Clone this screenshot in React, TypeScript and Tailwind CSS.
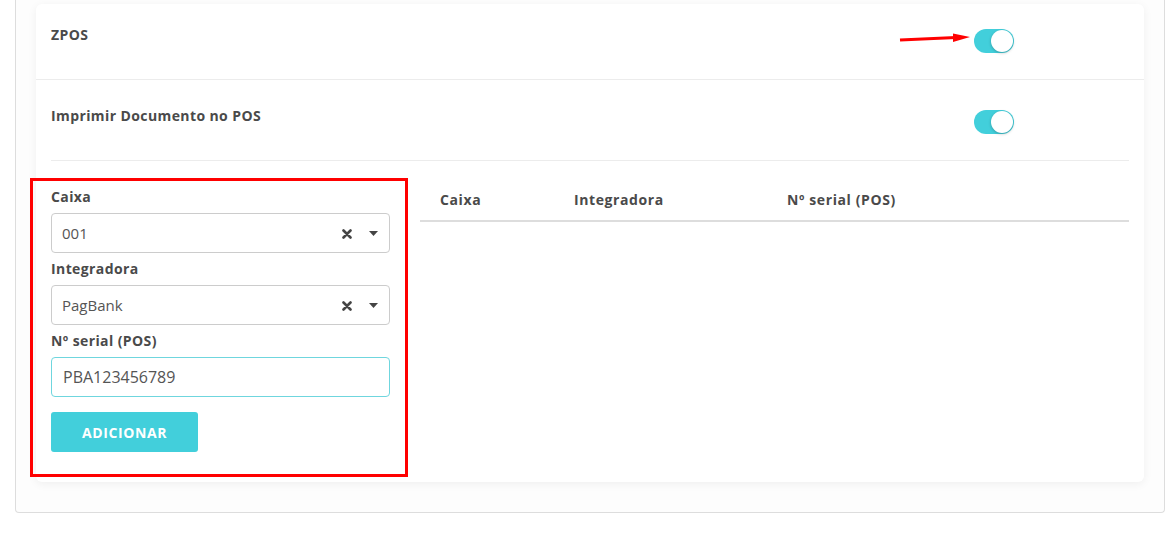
import { useState } from 'react';

const font = { fontFamily: '"Open Sans", "Liberation Sans", sans-serif' };

function Toggle({ on, onChange }: { on: boolean; onChange: () => void }) {
  return (
    <button
      type="button"
      onClick={onChange}
      className={`relative block h-[24px] w-[40px] rounded-full ${on ? 'bg-[#42cfdb]' : 'bg-[#ddd]'}`}
    >
      <span
        className={`absolute top-[1px] h-[22px] w-[22px] rounded-full bg-white shadow-[0_1px_3px_rgba(0,0,0,0.25)] ${on ? 'left-[17px]' : 'left-[1px]'}`}
      />
    </button>
  );
}

function SelectBox({ value }: { value: string }) {
  return (
    <div className="flex h-[40px] items-center rounded-[4px] border border-[#cccccc] bg-white pl-[10px] pr-[10px] text-[15px] text-[#555]">
      <span className="flex-1">{value}</span>
      <svg width="10" height="10" viewBox="0 0 10 10" className="mr-[17px] mt-[2px]">
        <path d="M1.5 1.5 L8.5 8.5 M8.5 1.5 L1.5 8.5" stroke="#444" strokeWidth="2.6" strokeLinecap="round" />
      </svg>
      <svg width="9" height="5" viewBox="0 0 9 5" className="mr-[1px]">
        <path d="M0 0 H9 L4.5 5 Z" fill="#444" />
      </svg>
    </div>
  );
}

export default function App() {
  const [zpos, setZpos] = useState(true);
  const [imprimir, setImprimir] = useState(true);

  return (
    <div style={font} className="min-h-[534px] bg-white">
      <div className="ml-[15px] mr-[7px] rounded-b-[4px] border-x border-b border-[#dddddd] bg-[#fdfdfd] px-5 pt-1 pb-[30px]">
        <div className="rounded-[6px] bg-white shadow-[0_2px_10px_rgba(0,0,0,0.06)]">
          {/* ZPOS */}
          <div className="flex h-[76px] border-b border-[#ececec] px-[15px] pt-[21px]">
            <h4 className="flex-1 text-[14px] font-bold leading-[20px] tracking-[0.4px] text-[#4a4a4a]">ZPOS</h4>
            <div className="relative mt-[4px] mr-[115px]">
              <svg
                width="74"
                height="12"
                viewBox="0 0 74 12"
                className="pointer-events-none absolute right-full top-[3px] mr-[2px]"
              >
                <path d="M2 8 L58 5.6" stroke="#ff0000" strokeWidth="3" />
                <polygon points="55,1.5 72,5 55,10" fill="#ff0000" />
              </svg>
              <Toggle on={zpos} onChange={() => setZpos(!zpos)} />
            </div>
          </div>

          {/* Imprimir */}
          <div className="mx-[15px] flex h-[81px] border-b border-[#ececec] pt-[26px]">
            <h4 className="flex-1 text-[14px] font-bold leading-[20px] tracking-[0.4px] text-[#4a4a4a]">
              Imprimir Documento no POS
            </h4>
            <div className="mt-[4px] mr-[115px]">
              <Toggle on={imprimir} onChange={() => setImprimir(!imprimir)} />
            </div>
          </div>

          {/* Form + table */}
          <div className="flex px-[15px] pb-[30px]">
            <div className="relative w-[339px] shrink-0 pt-[26px]">
              <div className="pointer-events-none absolute -left-[21px] -right-[18px] top-[17px] -bottom-[25px] border-[3px] border-[#ff0000]" />
              <label className="block text-[14px] font-bold leading-[20px] tracking-[0.4px] text-[#4a4a4a]">Caixa</label>
              <div className="mt-[6px]">
                <SelectBox value="001" />
              </div>
              <label className="mt-[6px] block text-[14px] font-bold leading-[20px] tracking-[0.4px] text-[#4a4a4a]">
                Integradora
              </label>
              <div className="mt-[6px]">
                <SelectBox value="PagBank" />
              </div>
              <label className="mt-[6px] block text-[14px] font-bold leading-[20px] tracking-[0.4px] text-[#4a4a4a]">
                Nº serial (POS)
              </label>
              <input
                defaultValue="PBA123456789"
                className="mt-[6px] block h-[40px] w-full rounded-[4px] border border-[#6fd6de] px-[11px] text-[16px] text-[#555] outline-none"
              />
              <button
                type="button"
                className="mt-[15px] h-[40px] w-[147px] rounded-[3px] bg-[#42cfdb] text-[14px] font-bold tracking-[0.6px] text-white"
              >
                ADICIONAR
              </button>
            </div>

            <div className="ml-[30px] flex-1 pt-[18px]">
              <table className="w-full border-collapse text-left">
                <thead>
                  <tr className="border-b-2 border-[#dddddd]">
                    <th className="w-[154px] py-[10px] pl-5 text-[14px] font-bold leading-[21px] tracking-[0.6px] text-[#4a4a4a]">
                      Caixa
                    </th>
                    <th className="w-[213px] py-[10px] text-[14px] font-bold leading-[21px] tracking-[0.6px] text-[#4a4a4a]">
                      Integradora
                    </th>
                    <th className="py-[10px] text-[14px] font-bold leading-[21px] tracking-[0.6px] text-[#4a4a4a]">
                      Nº serial (POS)
                    </th>
                  </tr>
                </thead>
                <tbody />
              </table>
            </div>
          </div>
        </div>
      </div>
    </div>
  );
}
